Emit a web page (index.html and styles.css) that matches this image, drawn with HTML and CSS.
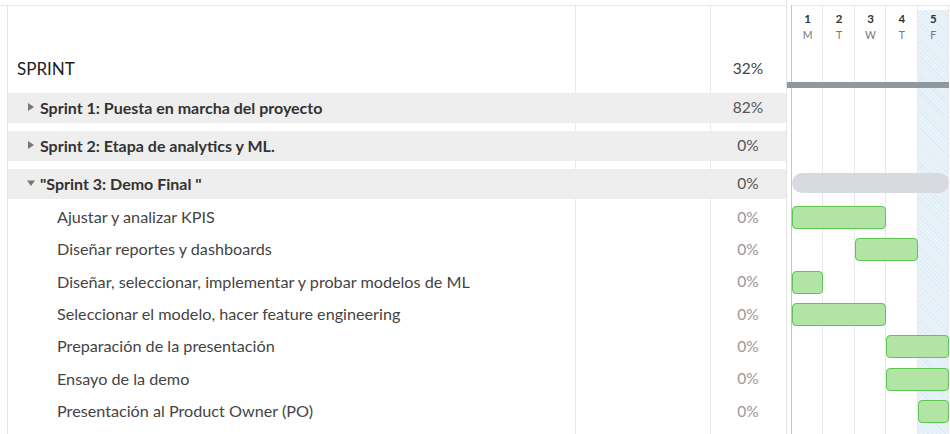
FILE: index.html
```html
<!DOCTYPE html>
<html lang="es">
<head>
<meta charset="utf-8">
<title>Sprint Gantt</title>
<link rel="stylesheet" href="styles.css">
</head>
<body>
<div class="app">
  <div class="left">
    <div class="table">
      <div class="head"></div>
      <div class="row row-root">
        <div class="name root-name">SPRINT</div>
        <div class="blank"></div>
        <div class="pct pct-root">32%</div>
      </div>
      <div class="sum-wrap">
        <div class="row row-sum">
          <div class="name sum-name"><svg class="tri" viewBox="0 0 8 8" width="8" height="8"><polygon points="1,0 7,4 1,8"/></svg>Sprint 1: Puesta en marcha del proyecto</div>
          <div class="blank"></div>
          <div class="pct pct-sum">82%</div>
        </div>
      </div>
      <div class="sum-wrap">
        <div class="row row-sum">
          <div class="name sum-name"><svg class="tri" viewBox="0 0 8 8" width="8" height="8"><polygon points="1,0 7,4 1,8"/></svg>Sprint 2: Etapa de analytics y ML.</div>
          <div class="blank"></div>
          <div class="pct pct-sum">0%</div>
        </div>
      </div>
      <div class="sum-wrap">
        <div class="row row-sum">
          <div class="name sum-name"><svg class="tri" viewBox="0 0 8 8" width="8" height="8"><polygon points="0,1.5 8,1.5 4,7"/></svg>"Sprint 3: Demo Final "</div>
          <div class="blank"></div>
          <div class="pct pct-sum">0%</div>
        </div>
      </div>
      <div class="row row-task"><div class="name task-name">Ajustar y analizar KPIS</div><div class="blank"></div><div class="pct pct-task">0%</div></div>
      <div class="row row-task"><div class="name task-name">Diseñar reportes y dashboards</div><div class="blank"></div><div class="pct pct-task">0%</div></div>
      <div class="row row-task"><div class="name task-name">Diseñar, seleccionar, implementar y probar modelos de ML</div><div class="blank"></div><div class="pct pct-task">0%</div></div>
      <div class="row row-task"><div class="name task-name">Seleccionar el modelo, hacer feature engineering</div><div class="blank"></div><div class="pct pct-task">0%</div></div>
      <div class="row row-task"><div class="name task-name">Preparación de la presentación</div><div class="blank"></div><div class="pct pct-task">0%</div></div>
      <div class="row row-task"><div class="name task-name">Ensayo de la demo</div><div class="blank"></div><div class="pct pct-task">0%</div></div>
      <div class="row row-task"><div class="name task-name">Presentación al Product Owner (PO)</div><div class="blank"></div><div class="pct pct-task">0%</div></div>
    </div>
  </div>
  <div class="gantt">
    <div class="days">
      <div class="ghead">
        <div class="day"><b>1</b><span>M</span></div>
        <div class="day"><b>2</b><span>T</span></div>
        <div class="day"><b>3</b><span>W</span></div>
        <div class="day"><b>4</b><span>T</span></div>
        <div class="day"><b>5</b><span>F</span></div>
      </div>
      <div class="grow grow-root"><div class="root-bar"></div></div>
      <div class="grow grow-sum"></div>
      <div class="grow grow-sum"></div>
      <div class="grow grow-sum"><div class="pill" style="grid-column: 1 / 6"></div></div>
      <div class="grow grow-task"><div class="bar" style="grid-column: 1 / 4"></div></div>
      <div class="grow grow-task"><div class="bar" style="grid-column: 3 / 5"></div></div>
      <div class="grow grow-task"><div class="bar" style="grid-column: 1 / 2"></div></div>
      <div class="grow grow-task"><div class="bar" style="grid-column: 1 / 4"></div></div>
      <div class="grow grow-task"><div class="bar" style="grid-column: 4 / 6"></div></div>
      <div class="grow grow-task"><div class="bar" style="grid-column: 4 / 6"></div></div>
      <div class="grow grow-task"><div class="bar" style="grid-column: 5 / 6"></div></div>
    </div>
  </div>
</div>
</body>
</html>
```
FILE: styles.css
```css
* { box-sizing: border-box; }
html, body { margin: 0; padding: 0; background: #fff; }
body {
  font-family: "Lato", "Open Sans", sans-serif;
  color: #333;
  overflow: hidden;
}
.app {
  display: flex;
  height: 434px;
  width: 950px;
}
.left {
  width: 786px;
  flex: none;
  margin-top: 5px;
  padding-left: 7px;
  border-top: 1px solid #e8e8e8;
  display: flex;
  flex-direction: column;
}
.table {
  flex: 1;
  border-left: 1px solid #e4e4e4;
  background-image:
    linear-gradient(#e8e8e8, #e8e8e8),
    linear-gradient(#e8e8e8, #e8e8e8);
  background-size: 1px 100%, 1px 100%;
  background-position: 567px 0, 702px 0;
  background-repeat: no-repeat;
}
.head { height: 44px; }
.row {
  display: grid;
  grid-template-columns: 567px 135px 1fr;
  align-items: center;
}
.row-root { height: 38px; padding-bottom: 2px; }
.sum-wrap { height: 38px; padding-top: 5px; }
.row-sum { height: 30px; background: #eeeeee; padding-bottom: 2px; }
.row-task { height: 32.333px; padding-bottom: 3px; }
.name { white-space: nowrap; font-size: 16.2px; }
.root-name { padding-left: 9px; color: #222; font-size: 17px; }
.sum-name {
  padding-left: 19px;
  font-size: 16px;
  font-weight: 700;
  color: #333;
  display: flex;
  align-items: center;
}
.tri { fill: #777; margin-right: 5px; flex: none; }
.task-name { padding-left: 49px; color: #444; }
.pct { text-align: center; font-size: 15.5px; }
.pct-root { color: #444; }
.pct-sum { color: #555; }
.pct-task { color: #999; }

.gantt {
  flex: 1;
  border-left: 1px solid #e4e4e4;
  padding-left: 4px;
}
.days {
  height: 100%;
  border-left: 1px solid #c6c6c6;
  background-image:
    repeating-linear-gradient(90deg, transparent 0 30.4px, #e8e8e8 30.4px 31.4px),
    repeating-linear-gradient(45deg, #e9f3f9 0 2px, #dcebf4 2px 3px);
  background-size: 100% 100%, 31.4px 100%;
  background-position: 0 0, 125.6px 5px;
  background-repeat: no-repeat;
}
.ghead {
  margin-top: 5px;
  height: 45px;
  border-top: 1px solid #e8e8e8;
  display: grid;
  grid-template-columns: repeat(5, 31.4px);
  padding-top: 6px;
}
.day {
  display: flex;
  flex-direction: column;
  align-items: center;
  gap: 2px;
}
.day b { font-size: 11.5px; line-height: 14px; color: #333; font-weight: 700; }
.day span { font-size: 10.5px; line-height: 14px; color: #777; }
.grow {
  display: grid;
  grid-template-columns: repeat(5, 31.4px);
  align-items: start;
}
.grow-root { height: 38px; }
.root-bar {
  grid-column: 1 / 6;
  margin-top: 32px;
  margin-left: -5px;
  height: 6px;
  background: #8e989f;
}
.grow-sum { height: 38px; }
.pill {
  margin-top: 9px;
  height: 20px;
  border-radius: 10px;
  background: #d9d9e1;
}
.grow-task { height: 32.333px; }
.bar {
  margin-top: 4px;
  height: 23px;
  border: 1px solid #5ec74f;
  border-radius: 4px;
  background: #b1e4a5;
}
```
